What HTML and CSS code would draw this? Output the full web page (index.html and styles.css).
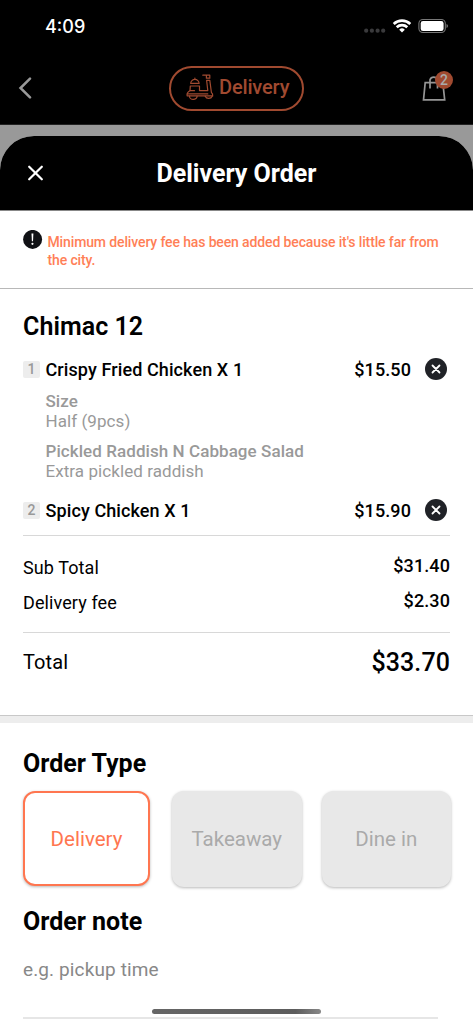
FILE: index.html
```html
<!DOCTYPE html>
<html lang="en">
<head>
<meta charset="utf-8">
<title>Delivery Order</title>
<link rel="stylesheet" href="styles.css">
</head>
<body>
<div class="screen">
  <div class="backdrop">
    <div class="status">
      <span class="time">4:09</span>
      <svg class="status-icons" width="88" height="20" viewBox="0 0 88 20">
        <g fill="#3a3a3c"><circle cx="4.200" cy="14.700" r="2.100"/><circle cx="9.900" cy="14.700" r="2.100"/><circle cx="15.600" cy="14.700" r="2.100"/><circle cx="21.200" cy="14.700" r="2.100"/></g>
        <g fill="none" stroke="#fff" stroke-width="2.700"><path d="M31.700 7.900a12.200 12.200 0 0 1 16.600 0"/><path d="M34.700 11.300a7.800 7.800 0 0 1 10.600 0"/></g>
        <path d="M37.200 13.700a4 4 0 0 1 5.600 0L40 16.600z" fill="#fff"/>
        <rect x="56.900" y="3.500" width="26.400" height="13" rx="4" fill="none" stroke="#777" stroke-width="1.100"/>
        <rect x="58.700" y="5.100" width="22.900" height="9.900" rx="2.300" fill="#fff"/>
        <path d="M84.500 8v4q1.500-.6 1.500-2t-1.500-2z" fill="#777"/>
      </svg>
    </div>
    <div class="nav">
      <svg class="back" width="14" height="22" viewBox="0 0 14 22" fill="none" stroke="#999" stroke-width="2.500" stroke-linecap="round"><path d="M12 1.600 2.500 11l9.500 9.400"/></svg>
      <div class="pill">
        <svg width="28" height="26" viewBox="0 0 28 26" fill="none" stroke="#a04a30" stroke-width="1.200" stroke-linejoin="round" stroke-linecap="round">
          <path d="M16.800 1.200h7v3h-3.400v-3"/>
          <path d="M4.700 9.400a4.200 4 0 0 1 8.400 0zM8.900 5.300V4"/>
          <path d="M4.300 12h9.200v4.600h8.300l-1.200-10.300h3.200l1.600 12.200q1.600 1.200 1.300 3.300H1.100q-.4-3.600 2.900-5.100z"/>
          <path d="M4 16.700h4.500M1.300 19.900h20.500"/>
          <path d="M3.500 22.200a3.800 3.200 0 0 0 7.600 0M19.200 22.200a3.700 3.200 0 0 0 7 0"/>
        </svg>
        <span>Delivery</span>
      </div>
      <div class="bag">
        <svg width="26" height="30" viewBox="0 0 26 30" fill="none" stroke="#969696" stroke-width="1.700"><path d="M4.200 9.700h17.600l1.900 17.200H2.500z"/><path d="M9 15.500V6.800a4 4 0 0 1 7.500 0v8.700"/></svg>
        <span class="badge">2</span>
      </div>
    </div>
  </div>
  <main class="sheet">
    <header class="sheet-head">
      <svg width="16" height="16" viewBox="0 0 16 16" stroke="#fff" stroke-width="2.200" stroke-linecap="round"><path d="M2.200 1.700 14.800 14.300M14.800 1.700 2.200 14.300"/></svg>
      <h1>Delivery Order</h1>
    </header>
    <section class="notice">
      <svg width="20" height="20" viewBox="0 0 20 20"><circle cx="9.600" cy="9.400" r="9.500" fill="#101115"/><path d="M8.500 3.600h1.900L10 11.200H8.900z" fill="#fff"/><circle cx="9.450" cy="13.800" r="1.100" fill="#fff"/></svg>
      <p>Minimum delivery fee has been added because it's little far from the city.</p>
    </section>
    <section class="order">
      <h2>Chimac 12</h2>
      <div class="item">
        <span class="num">1</span><span class="name">Crispy Fried Chicken X 1</span><span class="price">$15.50</span>
        <svg width="22" height="22" viewBox="0 0 22 22"><circle cx="11" cy="11" r="11" fill="#202227"/><path d="M7.500 7.500 14.500 14.500M14.500 7.500 7.500 14.500" stroke="#fff" stroke-width="1.800" stroke-linecap="round"/></svg>
      </div>
      <dl class="options">
        <dt>Size</dt><dd>Half (9pcs)</dd>
        <dt>Pickled Raddish N Cabbage Salad</dt><dd>Extra pickled raddish</dd>
      </dl>
      <div class="item">
        <span class="num">2</span><span class="name">Spicy Chicken X 1</span><span class="price">$15.90</span>
        <svg width="22" height="22" viewBox="0 0 22 22"><circle cx="11" cy="11" r="11" fill="#202227"/><path d="M7.500 7.500 14.500 14.500M14.500 7.500 7.500 14.500" stroke="#fff" stroke-width="1.800" stroke-linecap="round"/></svg>
      </div>
      <div class="sums">
        <div class="sum"><span>Sub Total</span><b>$31.40</b></div>
        <div class="sum"><span>Delivery fee</span><b>$2.30</b></div>
      </div>
      <div class="total"><span>Total</span><b>$33.70</b></div>
    </section>
    <div class="divider"></div>
    <section class="details">
      <h2>Order Type</h2>
      <div class="types">
        <div class="type selected">Delivery</div>
        <div class="type">Takeaway</div>
        <div class="type">Dine in</div>
      </div>
      <h2 class="note-title">Order note</h2>
      <div class="note">e.g. pickup time</div>
    </section>
  </main>
  <div class="home-bar"></div>
</div>
</body>
</html>
```
FILE: styles.css
```css
* { box-sizing: border-box; }
body { margin: 0; background: #fff; font-family: Roboto, sans-serif; color: #000; }
h1, h2, p, dl, dd { margin: 0; }
svg { display: block; flex: none; }
.screen { position: relative; width: 473px; height: 1024px; overflow: hidden; background: #999; display: flex; flex-direction: column; }
.backdrop { height: 125px; flex: none; background: #000; border-bottom: 1px solid #222; }
.status { height: 53px; padding: 0 22px 0 45px; display: flex; align-items: center; justify-content: space-between; }
.time { color: #fff; font: 500 18px/20px Inter, sans-serif; }
.status-icons { margin-right: 1px; margin-top: -1px; }
.nav { height: 70px; padding: 0 20px 0 18px; display: flex; align-items: center; justify-content: space-between; }
.back { margin-top: -1px; }
.pill { width: 135px; height: 45px; margin-left: 20px; border: 2px solid #a04a30; border-radius: 23px; display: flex; align-items: center; padding-left: 15px; gap: 5px; color: #a04a30; font-size: 20px; font-weight: 500; letter-spacing: -.15px; }
.pill span { margin-top: -2px; }
.pill svg { margin-top: -2px; }
.bag { position: relative; width: 32px; height: 30px; }
.badge { position: absolute; top: -2px; right: 0; width: 18px; height: 18px; border-radius: 50%; background: #a04a30; color: #aaa; font: 500 14px/18px Roboto, sans-serif; text-align: center; }
.sheet { margin-top: 11px; height: 888px; background: #fff; border-radius: 34px 34px 0 0; overflow: hidden; }
.sheet-head { height: 75px; background: #000; border-bottom: 1px solid #888; display: grid; grid-template-columns: 56px 1fr 56px; align-items: center; }
.sheet-head svg { margin-left: 27px; }
.sheet-head h1 { color: #fff; font-size: 25px; font-weight: 700; line-height: 30px; text-align: center; padding-top: 2px; }
.notice { height: 78px; border-bottom: 1px solid #b8b8b8; padding: 19px 20px 0 23px; display: flex; gap: 4.5px; }
.notice p { color: #ff7f57; font-size: 14px; font-weight: 500; line-height: 17.5px; letter-spacing: -.13px; padding-top: 4px; }
.order { height: 426px; padding: 23px 23px 0; }
.divider { height: 8px; background: #ededed; border-top: 1px solid #c8c8c8; }
h2 { font-size: 25px; line-height: 30px; font-weight: 700; }
.order h2 { font-weight: 600; letter-spacing: .05px; }
.item { height: 28px; display: flex; align-items: center; font-size: 18px; line-height: 22px; font-weight: 500; letter-spacing: .1px; }
.order h2 + .item { margin-top: 13px; }
.item svg { margin: 0 3px 0 14px; }
.num { width: 17px; height: 17px; margin-right: 5.5px; border-radius: 2px; background: #ededed; color: #999; font-size: 14px; line-height: 17px; text-align: center; }
.name { flex: 1; }
.name, .price { padding-top: 1px; }
.options { padding: 8px 0 15px 22.500px; color: #999; font-size: 17px; line-height: 20px; letter-spacing: .07px; }
.options dt { font-weight: 500; }
.options dd + dt { margin-top: 10px; }
.sums { margin-top: 11px; height: 98px; border: solid #d8d8d8; border-width: 1px 0; padding-top: 21px; }
.sum { height: 35px; display: flex; justify-content: space-between; font-size: 18px; line-height: 21px; letter-spacing: .1px; }
.sum b { font-weight: 500; margin-top: -2px; }
.total { display: flex; height: 58px; align-items: center; justify-content: space-between; font-size: 20px; letter-spacing: .1px; }
.total b { font-size: 25px; font-weight: 500; }
.details { padding: 26px 22px 0 23px; }
.types { display: flex; gap: 20px; margin-top: 12px; height: 96px; }
.type { flex: 1; height: 96px; background: #e8e8e8; color: #aaa; border-radius: 12px; box-shadow: 0 1px 3px rgba(0,0,0,.28); display: flex; align-items: center; justify-content: center; padding-bottom: 1px; font-size: 20.500px; }
.type.selected { flex: none; width: 127px; height: 95px; margin-right: 2px; padding-bottom: 0; background: #fff; color: #ff7650; border: 2px solid #ff7650; }
.note-title { margin-top: 20px; }
.note { margin-right: 13px; height: 82px; border-bottom: 2px solid #e6e6e6; padding-top: 22px; font-size: 19px; line-height: 22px; letter-spacing: .12px; color: #888; }
.home-bar { position: absolute; left: 152px; top: 1009px; width: 169px; height: 5px; border-radius: 3px; background: linear-gradient(90deg, #666, #5c5c5c 85%, #888); }
```
